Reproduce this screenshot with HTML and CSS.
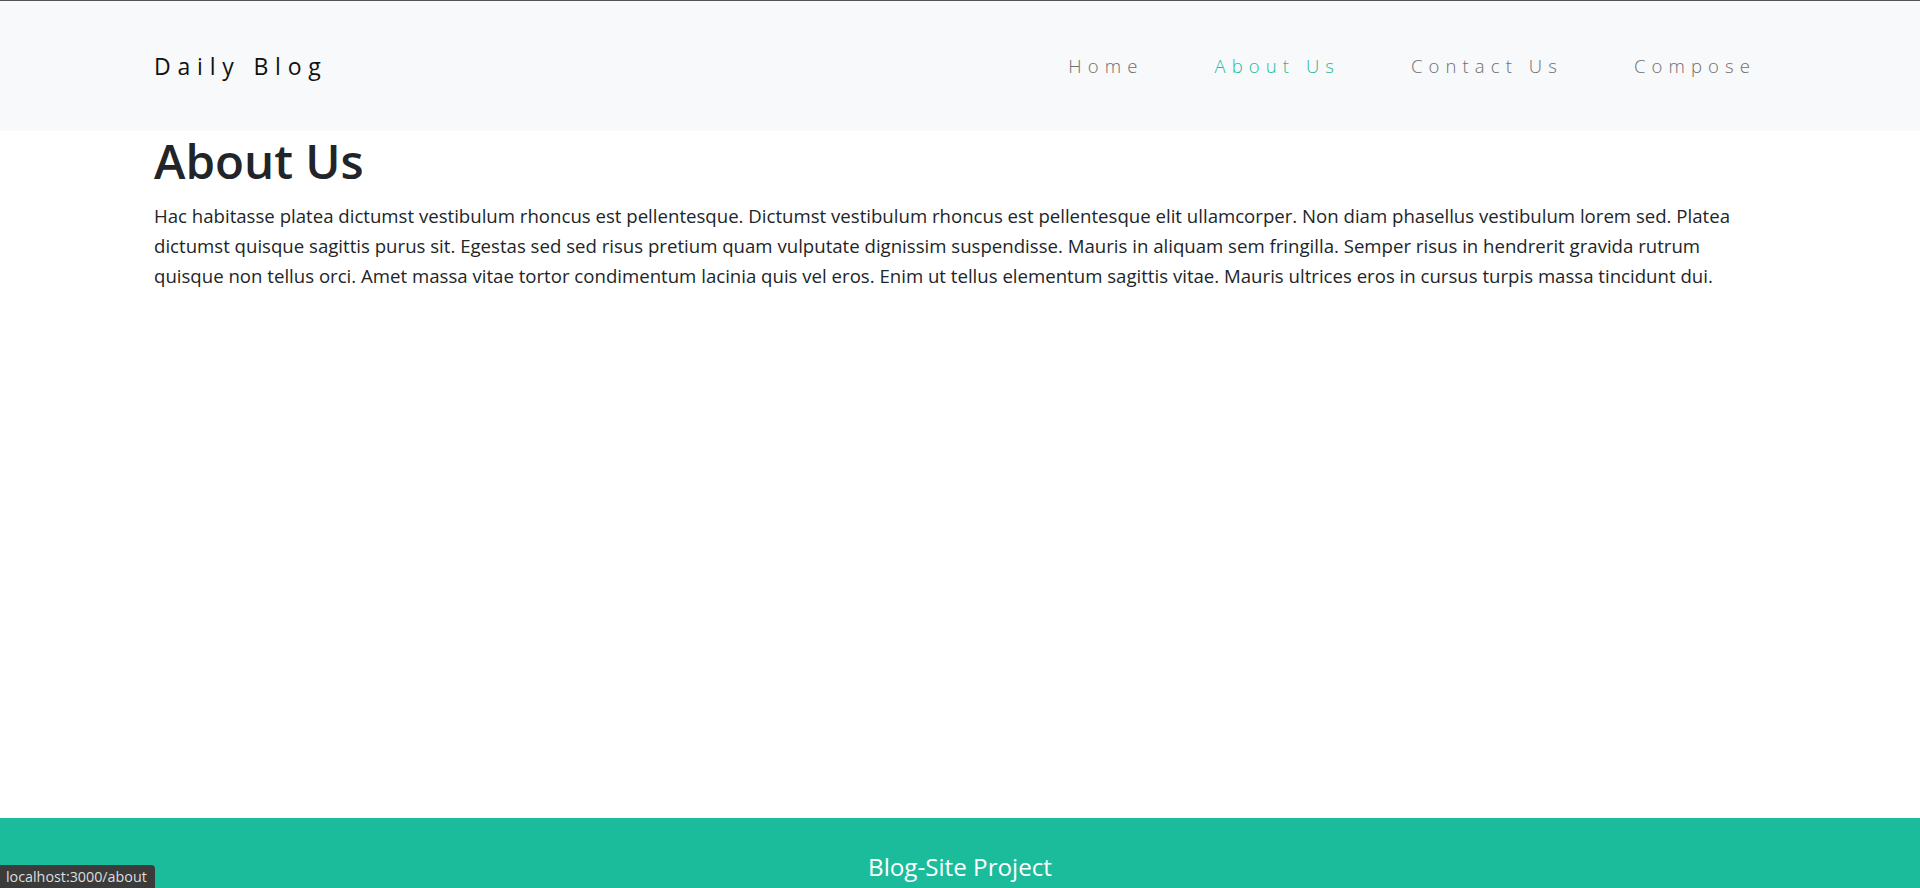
FILE: index.html
```html
<!DOCTYPE html>
<html lang="en">
<head>
<meta charset="utf-8">
<title>Daily Blog - About Us</title>
<link rel="stylesheet" href="styles.css">
</head>
<body>
<header class="navbar">
  <a class="brand" href="#">Daily Blog</a>
  <nav class="nav">
    <a class="nav-link" href="#">Home</a>
    <a class="nav-link active" href="#">About Us</a>
    <a class="nav-link" href="#">Contact Us</a>
    <a class="nav-link" href="#">Compose</a>
  </nav>
</header>
<main class="content">
  <h1 class="title">About Us</h1>
  <p class="text">Hac habitasse platea dictumst vestibulum rhoncus est pellentesque. Dictumst vestibulum rhoncus est pellentesque elit ullamcorper. Non diam phasellus vestibulum lorem sed. Platea dictumst quisque sagittis purus sit. Egestas sed sed risus pretium quam vulputate dignissim suspendisse. Mauris in aliquam sem fringilla. Semper risus in hendrerit gravida rutrum quisque non tellus orci. Amet massa vitae tortor condimentum lacinia quis vel eros. Enim ut tellus elementum sagittis vitae. Mauris ultrices eros in cursus turpis massa tincidunt dui.</p>
</main>
<footer class="footer">
  <p class="footer-text">Blog-Site Project</p>
</footer>
<div class="status">localhost:3000/about</div>
</body>
</html>
```
FILE: styles.css
```css
html, body {
  margin: 0;
  padding: 0;
}
body {
  font-family: "Open Sans", "Noto Sans", sans-serif;
  color: #212529;
  background: #ffffff;
  min-height: 100vh;
  display: flex;
  flex-direction: column;
}
.navbar {
  height: 130px;
  border-top: 1px solid #555555;
  background: #f8f9fa;
  padding: 0 154px;
  display: flex;
  align-items: center;
  justify-content: space-between;
}
.brand {
  font-size: 23px;
  letter-spacing: 6.8px;
  color: #111111;
  text-decoration: none;
  line-height: 30px;
}
.nav {
  display: flex;
  align-items: center;
  gap: 51px;
}
.nav-link {
  font-size: 18.5px;
  font-weight: 300;
  letter-spacing: 6.1px;
  color: #6e6f70;
  text-decoration: none;
  padding: 0 10px;
  line-height: 30px;
}
.nav-link.active {
  color: #1abc9c;
}
.content {
  padding: 0 154px;
}
.title {
  margin: 0 0 10px;
  font-size: 47.5px;
  font-weight: 600;
  line-height: 60px;
  color: #212529;
}
.text {
  margin: 0;
  font-size: 18.63px;
  line-height: 30px;
  color: #212529;
}
.footer {
  margin-top: auto;
  height: 70px;
  background: #1abc9c;
  text-align: center;
}
.footer-text {
  margin: 0;
  padding-top: 34px;
  font-size: 24.2px;
  line-height: 30px;
  color: #ffffff;
}
.status {
  position: fixed;
  left: 0;
  bottom: 0;
  width: 143px;
  height: 23px;
  padding: 0 6px;
  background: #3b3b3b;
  border-top-right-radius: 4px;
  color: #dedede;
  font-size: 14.3px;
  line-height: 23px;
  white-space: nowrap;
}
```
